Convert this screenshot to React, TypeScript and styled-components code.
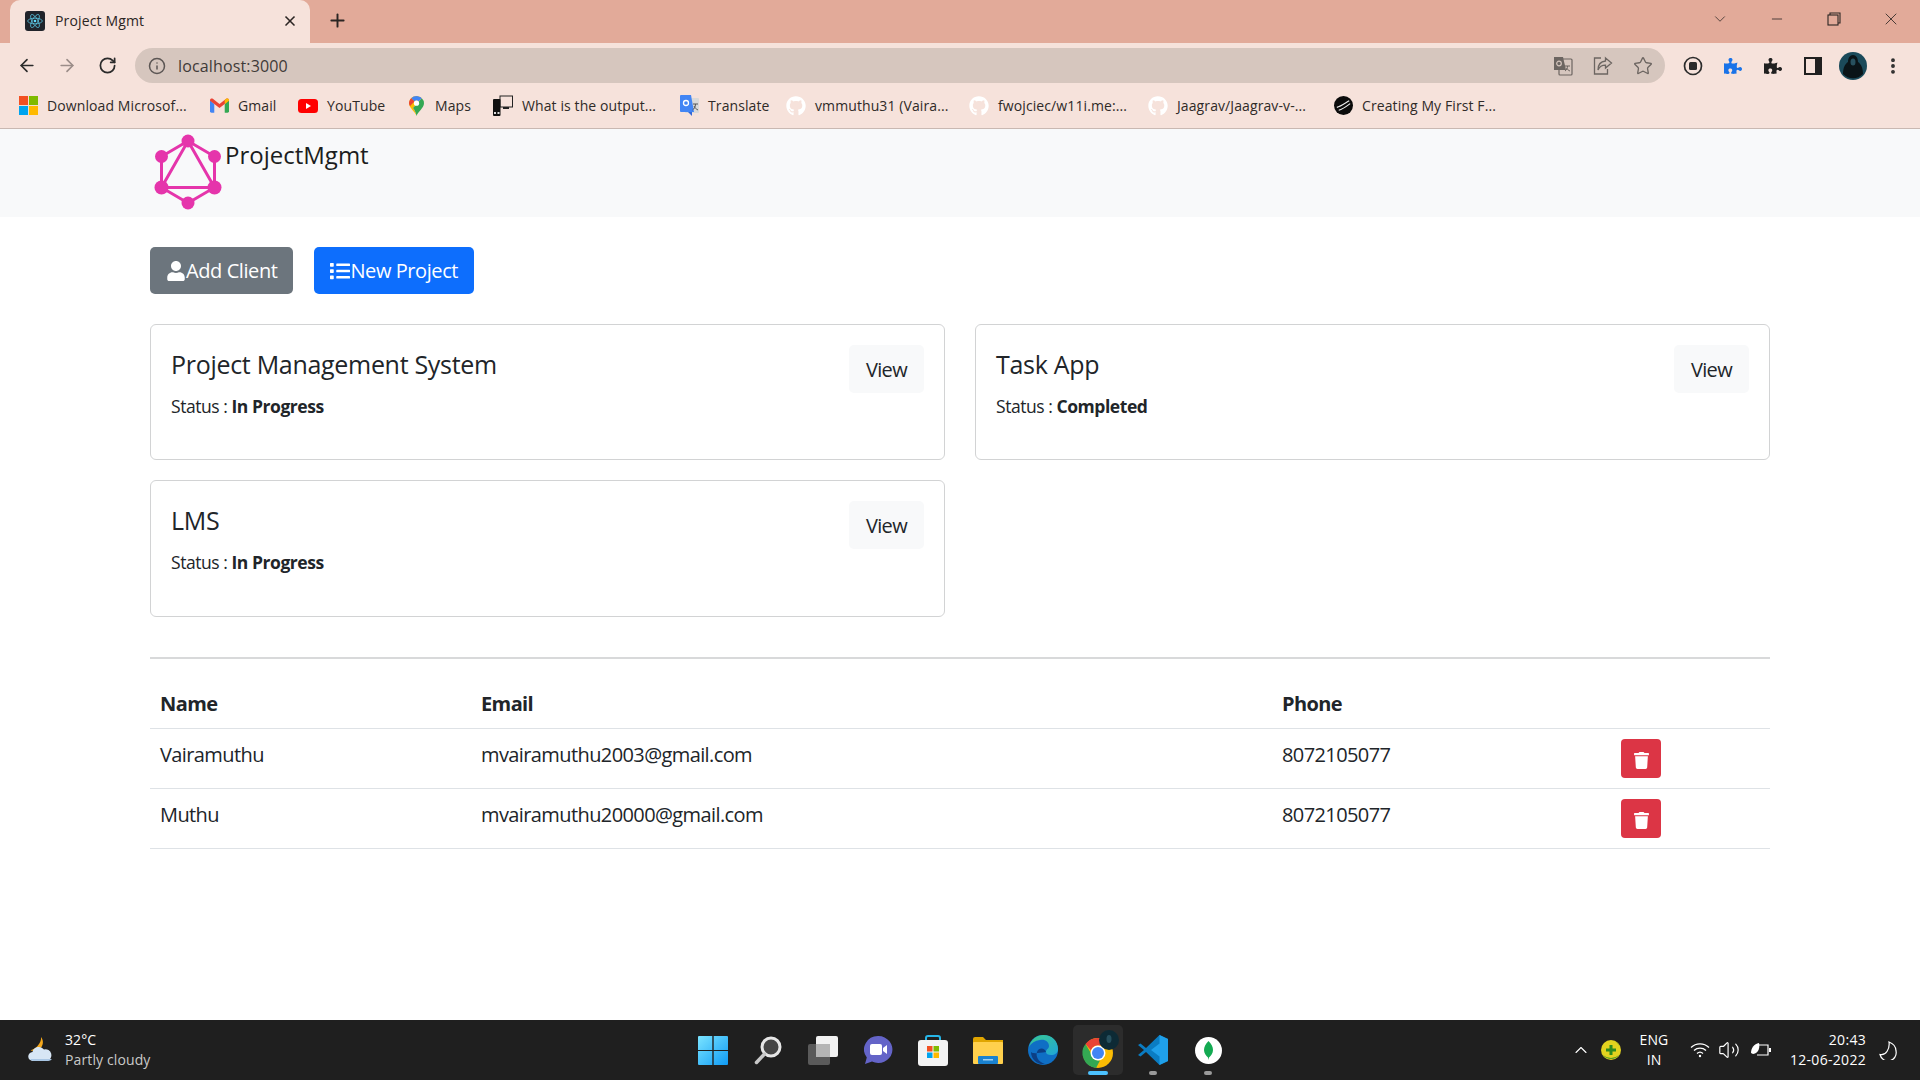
import styled, { createGlobalStyle } from 'styled-components';
import { FaGithub, FaList, FaTrash, FaUser, FaPuzzlePiece } from 'react-icons/fa';
import { ArrowLeft, ArrowRight, RotateCw, Info, X, Plus, Star, ChevronDown, ChevronUp, Minus, EllipsisVertical, Volume2 } from 'lucide-react';

const GlobalStyle = createGlobalStyle`
  * { box-sizing: border-box; }
  html, body { margin: 0; padding: 0; height: 100%; background: #fff; overflow: hidden; }
  body { font-family: "Open Sans", "Liberation Sans", sans-serif; color: #212529; }
`;

const Screen = styled.div`
  display: flex;
  flex-direction: column;
  width: 1920px;
  height: 1080px;
`;

/* browser chrome */
const TabStrip = styled.div`
  display: flex;
  align-items: flex-end;
  height: 43px;
  padding-left: 10px;
  background: #e2aa99;
  color: #2b2523;
`;

const Tab = styled.div`
  display: flex;
  align-items: center;
  width: 300px;
  height: 43px;
  padding: 0 12px 2px 15px;
  background: #f6e2db;
  border-radius: 10px 10px 0 0;
  font-size: 14px;
  letter-spacing: 0.15px;
`;

const Favicon = styled.div`
  display: flex;
  align-items: center;
  justify-content: center;
  width: 20px;
  height: 20px;
  margin-right: 10px;
  background: #20232a;
  border-radius: 3px;
`;

const TabTitle = styled.span`
  flex: 1;
`;

const NewTab = styled.div`
  display: flex;
  align-items: center;
  height: 43px;
  margin-left: 17px;
  padding-bottom: 2px;
`;

const WindowControls = styled.div`
  display: flex;
  align-items: center;
  height: 38px;
  margin: 0 1px 5px auto;
`;

const WindowButton = styled.div`
  display: flex;
  justify-content: center;
  width: 57px;
`;

const Toolbar = styled.div`
  display: flex;
  align-items: center;
  height: 40px;
  padding: 0 0 0 17px;
  background: #f6e2db;
  color: #2b2b2b;
`;

const NavButton = styled.div<{ $muted?: boolean }>`
  display: flex;
  justify-content: center;
  width: 20px;
  margin: 4px 20px 0 0;
  color: ${(p) => (p.$muted ? '#9b8d89' : '#2b2b2b')};
`;

const AddressBar = styled.div`
  display: flex;
  align-items: center;
  width: 1530px;
  height: 35px;
  margin: 5px 0 0 -2px;
  padding: 0 12px 0 13px;
  background: #d6c6be;
  border-radius: 18px;
`;

const AddressText = styled.span`
  flex: 1;
  margin-left: 12px;
  font-size: 16px;
  letter-spacing: 0.15px;
  color: #3f3a38;
`;

const AddressIcons = styled.div`
  display: flex;
  align-items: center;
  gap: 20px;
  color: #6c6561;
`;

const ToolIcons = styled.div`
  display: flex;
  align-items: center;
  margin-top: 5px;
  padding-left: 8px;
`;

const ToolIcon = styled.div`
  display: flex;
  align-items: center;
  justify-content: center;
  width: 40px;
`;

const BookmarkBar = styled.div`
  display: flex;
  align-items: center;
  height: 46px;
  padding: 0 0 0 18px;
  background: #f6e2db;
  border-bottom: 1px solid #c9b8b2;
`;

const Bookmark = styled.div<{ $width: number }>`
  display: flex;
  align-items: center;
  width: ${(p) => p.$width}px;
  font-size: 14px;
  letter-spacing: 0.1px;
  color: #2f2a28;
  white-space: nowrap;
`;

const BookmarkIcon = styled.div`
  display: flex;
  justify-content: center;
  width: 20px;
  margin-right: 9px;
`;

/* app page */
const Navbar = styled.nav`
  height: 88px;
  flex: none;
  background: #f8f9fa;
`;

const Brand = styled.div`
  display: flex;
  width: 1620px;
  margin: 0 auto;
  padding: 5px 0 0 3px;
`;

const BrandName = styled.div`
  margin-left: 2px;
  padding-top: 6px;
  font-size: 24px;
  line-height: 30px;
  letter-spacing: 0;
  color: #1b1d20;
`;

const Main = styled.main`
  flex: 1;
  width: 1620px;
  margin: 0 auto;
  padding-top: 30px;
`;

const ActionRow = styled.div`
  display: flex;
  gap: 21px;
  margin-bottom: 30px;
`;

const ActionButton = styled.button<{ $bg: string }>`
  display: flex;
  align-items: center;
  height: 47px;
  padding: 0 16px 0 16px;
  border: none;
  border-radius: 5px;
  background: ${(p) => p.$bg};
  color: #fff;
  font: inherit;
  font-size: 20px;
  letter-spacing: -0.42px;

  svg {
    width: 20px;
    height: 20px;
    margin-right: 0;
  }
`;

const CardGrid = styled.div`
  display: grid;
  grid-template-columns: 795px 795px;
  grid-template-rows: 136px 137px;
  column-gap: 30px;
  row-gap: 20px;
`;

const Card = styled.div`
  padding: 20px;
  border: 1px solid #d2d3d4;
  border-radius: 6px;
`;

const CardHead = styled.div`
  display: flex;
  justify-content: space-between;
  align-items: flex-start;
  height: 47px;
`;

const CardTitle = styled.h5`
  margin: 0;
  padding-top: 4px;
  font-size: 25px;
  font-weight: 400;
  line-height: 30px;
  letter-spacing: -0.3px;
`;

const ViewButton = styled.button`
  width: 75px;
  height: 48px;
  border: none;
  border-radius: 5px;
  background: #f8f9fa;
  color: #212529;
  font: inherit;
  font-size: 20px;
  letter-spacing: -0.7px;
`;

const Status = styled.p`
  margin: 0;
  font-size: 17.5px;
  line-height: 28px;
  letter-spacing: -0.45px;

  strong {
    font-weight: 700;
  }
`;

const Divider = styled.hr`
  margin: 40px 0 19px;
  border: none;
  border-top: 2px solid #d8d9da;
`;

const Table = styled.table`
  width: 100%;
  border-collapse: collapse;
  table-layout: fixed;
  font-size: 20px;
  letter-spacing: -0.6px;
`;

const Col = styled.col<{ $width: number }>`
  width: ${(p) => p.$width}px;
`;

const HeadCell = styled.th`
  height: 50px;
  padding: 11px 10px 9px;
  border-bottom: 1px solid #dee2e6;
  font-weight: 700;
  text-align: left;
  line-height: 30px;
`;

const Cell = styled.td`
  height: 60px;
  padding: 11px 10px 9px;
  border-bottom: 1px solid #dee2e6;
  line-height: 30px;
  vertical-align: top;
`;

const DeleteButton = styled.button`
  display: flex;
  align-items: center;
  justify-content: center;
  width: 40px;
  height: 39px;
  margin-top: -1px;
  padding: 4px 0 0;
  border: none;
  border-radius: 4px;
  background: #dc3545;
  color: #fff;

  svg {
    width: 15px;
    height: 17px;
  }
`;

/* windows taskbar */
const Taskbar = styled.footer`
  display: grid;
  grid-template-columns: 660px 900px 360px;
  flex: none;
  height: 60px;
  background: #1f1f1f;
  color: #fff;
`;

const Weather = styled.div`
  display: flex;
  align-items: center;
  padding-left: 26px;
`;

const WeatherText = styled.div`
  margin-left: 11px;
  padding-bottom: 1px;
  font-size: 14px;
  line-height: 20px;
  letter-spacing: 0.12px;

  span {
    display: block;
    color: #c9c9c9;
  }
`;

const TaskIcons = styled.div`
  display: flex;
  align-items: center;
  padding-left: 28px;
`;

const TaskIcon = styled.div<{ $active?: boolean; $dot?: 'blue' | 'grey' }>`
  position: relative;
  display: flex;
  align-items: center;
  justify-content: center;
  flex: none;
  width: 50px;
  height: 50px;
  margin-right: 5px;
  border-radius: 5px;
  background: ${(p) => (p.$active ? '#2c2c2c' : 'transparent')};

  &::after {
    content: '';
    display: ${(p) => (p.$dot ? 'block' : 'none')};
    position: absolute;
    left: 50%;
    bottom: 0;
    width: ${(p) => (p.$dot === 'blue' ? 20 : 8)}px;
    height: 4px;
    border-radius: 2px;
    background: ${(p) => (p.$dot === 'blue' ? '#4cc2ff' : '#9a9a9a')};
    transform: translateX(-50%);
  }
`;

const Tray = styled.div`
  display: flex;
  align-items: center;
  padding-left: 10px;
  font-size: 14px;
  letter-spacing: 0.1px;
`;

const TrayIcon = styled.div<{ $width: number }>`
  display: flex;
  justify-content: center;
  flex: none;
  width: ${(p) => p.$width}px;

  svg {
    flex: none;
  }
`;

const Lang = styled.div`
  flex: none;
  width: 48px;
  text-align: center;
  line-height: 20px;
`;

const Clock = styled.div`
  flex: none;
  width: 80px;
  text-align: right;
  line-height: 20px;
  letter-spacing: 0.3px;
  white-space: nowrap;
`;

const ReactMark = () => (
  <svg width="16" height="16" viewBox="-12 -12 24 24" fill="none" stroke="#61dafb" strokeWidth="1">
    <circle r="2" fill="#61dafb" stroke="none" />
    <ellipse rx="11" ry="4.2" />
    <ellipse rx="11" ry="4.2" transform="rotate(60)" />
    <ellipse rx="11" ry="4.2" transform="rotate(120)" />
  </svg>
);

const MsLogo = () => (
  <svg width="19" height="19" viewBox="0 0 20 20">
    <rect width="9.5" height="9.5" fill="#f25022" />
    <rect x="10.5" width="9.5" height="9.5" fill="#7fba00" />
    <rect y="10.5" width="9.5" height="9.5" fill="#00a4ef" />
    <rect x="10.5" y="10.5" width="9.5" height="9.5" fill="#ffb900" />
  </svg>
);

const GmailLogo = () => (
  <svg width="19" height="15" viewBox="0 0 20 15">
    <path d="M0 2v11.5A1.5 1.5 0 0 0 1.500 15H4.500V6z" fill="#4285f4" />
    <path d="M20 2v11.500a1.500 1.500 0 0 1-1.500 1.500H15.500V6z" fill="#34a853" />
    <path d="M4.500 6 0 2.500V1.800C0 .3 1.800-.5 3 .5L10 6l7-5.500c1.200-1 3-.2 3 1.300v.7L15.500 6 10 10z" fill="#ea4335" />
    <path d="M15.500 6 20 2.500V1.800c0-1.500-1.800-2.300-3-1.300L15.500 1.800z" fill="#fbbc04" />
  </svg>
);

const YoutubeLogo = () => (
  <svg width="20" height="14" viewBox="0 0 20 14">
    <rect width="20" height="14" rx="3.500" fill="#f00" />
    <path d="M8 4l5 3-5 3z" fill="#fff" />
  </svg>
);

const MapsLogo = () => (
  <svg width="15" height="20" viewBox="0 0 15 20">
    <path d="M7.500 20C6.500 16 0 12 0 7.200A7.500 7.200 0 0 1 7.500 0c2 0 4 1 5.300 2.200L4 12c1.500 2 3 4.500 3.500 8z" fill="#fbbc04" />
    <path d="M12.800 2.200A7.200 7.200 0 0 1 15 7.200C15 12 8.500 16 7.500 20 7 16.500 5.500 14 4 12z" fill="#34a853" />
    <path d="M2.200 2.200A7.500 7.200 0 0 1 7.500 0c2 0 4 1 5.300 2.200L9.500 5.500a3 3 0 0 0-4 0z" fill="#4285f4" />
    <path d="M2.200 2.200 5.500 5.500 1 10A7 7 0 0 1 0 7.200c0-2 1-3.800 2.200-5z" fill="#ea4335" />
    <circle cx="7.500" cy="7.200" r="2.600" fill="#fff" />
  </svg>
);

const DevicesLogo = () => (
  <svg width="20" height="21" viewBox="0 0 20 21">
    <rect x="7" y="1" width="12.500" height="11" fill="#f6e2db" stroke="#222" />
    <path d="M10 12h6v2h-6z" fill="#222" />
    <rect y="4" width="7.500" height="17" rx="1" fill="#111" />
    <rect x="1" y="17" width="2" height="2" fill="#ddd" />
    <rect x="4.500" y="17" width="2" height="2" fill="#ddd" />
  </svg>
);

const TranslateLogo = () => (
  <svg width="19" height="21" viewBox="0 0 19 21">
    <rect x="5" y="3" width="14" height="15" rx="1" fill="#d9d9d9" />
    <path d="M1 0h10l3 17H1a1 1 0 0 1-1-1V1a1 1 0 0 1 1-1z" fill="#4285f4" />
    <path d="M8 17h4v4z" fill="#3367d6" />
    <circle cx="6" cy="8" r="2.500" fill="none" stroke="#fff" strokeWidth="1.300" />
    <path d="M13 9h5M15.500 9c0 3-1.500 5-3 6M14 11c1 2 2 3 4 4" stroke="#555" strokeWidth="1" fill="none" />
  </svg>
);

const CreatingLogo = () => (
  <svg width="19" height="19" viewBox="0 0 20 20">
    <circle cx="10" cy="10" r="10" fill="#0b0b0b" />
    <path d="M3 12c4-1 8-4 13-7M5 15c4-1 8-4 12-7" stroke="#eee" strokeWidth="1.200" fill="none" />
  </svg>
);

const GraphqlLogo = () => (
  <svg width="70" height="78" viewBox="0 0 70 78" fill="none" stroke="#e535ab" strokeWidth="3">
    <path d="M35 7 61.500 22.500V53.500L35 69 8.500 53.500V22.500Z" />
    <path d="M35 7 61.500 53.500H8.500Z" />
    <g fill="#e535ab" stroke="none">
      <circle cx="35" cy="7" r="6.500" />
      <circle cx="61.500" cy="22.500" r="6.500" />
      <circle cx="61.500" cy="53.500" r="7" />
      <circle cx="35" cy="69" r="6.500" />
      <circle cx="8.500" cy="53.500" r="7" />
      <circle cx="8.500" cy="22.500" r="6.500" />
    </g>
  </svg>
);

const TranslateAction = () => (
  <svg width="20" height="20" viewBox="0 0 20 20">
    <rect x="6" y="3" width="13" height="16" rx="1" fill="#d6c6be" stroke="#6c6561" strokeWidth="1.200" />
    <path d="M1 1h9l3 13H1z" fill="#6c6561" />
    <circle cx="6" cy="7.500" r="2.300" fill="none" stroke="#d6c6be" strokeWidth="1.200" />
    <path d="M12 10h5M14.500 10c0 2.500-1 4-2.500 5M13.500 12c1 1.500 2 2.500 3.500 3" stroke="#6c6561" fill="none" />
  </svg>
);

const ShareAction = () => (
  <svg width="20" height="20" viewBox="0 0 20 20" fill="none" stroke="#6c6561" strokeWidth="1.300">
    <path d="M8 2H1.500v16h13v-5" />
    <path d="M12.500 2 18.500 7 12.500 12V9.200C9 9.200 6.500 10.500 5 14c0-5 2.500-8.500 7.500-9z" />
  </svg>
);

const RecordIcon = () => (
  <svg width="20" height="20" viewBox="0 0 20 20">
    <circle cx="10" cy="10" r="8.500" fill="none" stroke="#2b2b2b" strokeWidth="1.700" />
    <rect x="6" y="6" width="8" height="8" rx="1.500" fill="#2b2b2b" />
  </svg>
);

const SidebarIcon = () => (
  <svg width="18" height="18" viewBox="0 0 18 18">
    <path d="M1 1h16v16H1z" fill="#f6e2db" stroke="#202020" strokeWidth="2" />
    <rect x="11" y="1" width="6" height="16" fill="#202020" />
  </svg>
);

const AvatarIcon = () => (
  <svg width="28" height="28" viewBox="0 0 28 28">
    <circle cx="14" cy="14" r="14" fill="#1b4a5a" />
    <path d="M14 3c3 0 5 3 5 7 3 2 5 6 5 12a14 14 0 0 1-20 0c0-6 2-10 5-12 0-4 2-7 5-7z" fill="#0a1418" />
    <ellipse cx="14" cy="10" rx="2.500" ry="3.500" fill="#27505e" />
  </svg>
);

const WeatherIcon = () => (
  <svg width="28" height="28" viewBox="0 0 28 28">
    <path d="M15 1c2.500 3 2.500 7 .5 10s-6 4.500-11 3.500c1.500-1 4.500-1.500 7-4.500s4-6 3.500-9z" fill="#f5a81c" />
    <path d="M7 25a4.500 4.500 0 0 1-.5-9A6.500 6.500 0 0 1 18 13.500 5.800 5.800 0 0 1 21 25z" fill="#d7e6f5" />
    <path d="M7 25a4.500 4.500 0 0 1-3-2h22a5 5 0 0 1-5 2z" fill="#a9c6e4" />
  </svg>
);

const WindowsIcon = () => (
  <svg width="30" height="29" viewBox="0 0 30 29">
    <defs>
      <linearGradient id="win" x1="0" y1="0" x2="1" y2="1">
        <stop offset="0" stopColor="#7be4ff" />
        <stop offset="1" stopColor="#0f9bf5" />
      </linearGradient>
    </defs>
    <path d="M1 0h13.300v14H0V1a1 1 0 0 1 1-1zM15.700 0H29a1 1 0 0 1 1 1v13H15.700zM0 15h14.300v14H1a1 1 0 0 1-1-1zM15.700 15H30v13a1 1 0 0 1-1 1H15.700z" fill="url(#win)" />
  </svg>
);

const SearchIcon = () => (
  <svg width="28" height="29" viewBox="0 0 28 29">
    <circle cx="17" cy="11" r="9" fill="#454545" stroke="#e6e6e6" strokeWidth="3" />
    <path d="M10.500 18 2.500 26.500" stroke="#c8c8c8" strokeWidth="3.500" strokeLinecap="round" />
  </svg>
);

const TaskViewIcon = () => (
  <svg width="30" height="29" viewBox="0 0 30 29">
    <rect y="8" width="22" height="21" rx="2" fill="#5a5a5a" />
    <rect x="8" width="22" height="21" rx="2" fill="#f2f2f2" />
    <rect x="8" y="8" width="14" height="13" fill="#b5b5b5" />
  </svg>
);

const ChatIcon = () => (
  <svg width="29" height="30" viewBox="0 0 29 30">
    <path d="M14.500 1a14 13.500 0 1 1-6.500 25.500L1 29l1.800-6.500A14 13.500 0 0 1 14.500 1z" fill="#6464c8" />
    <rect x="6" y="9" width="12" height="11" rx="2" fill="#fff" />
    <path d="M19 13l4-3v9l-4-3z" fill="#fff" />
  </svg>
);

const StoreIcon = () => (
  <svg width="30" height="31" viewBox="0 0 30 31">
    <path d="M8 6V3a2 2 0 0 1 2-2h10a2 2 0 0 1 2 2v3" fill="none" stroke="#26b6e8" strokeWidth="2" />
    <rect y="5" width="30" height="26" rx="3" fill="#f3f3f3" />
    <rect x="9" y="11" width="5.500" height="5.500" fill="#f25022" />
    <rect x="15.500" y="11" width="5.500" height="5.500" fill="#7fba00" />
    <rect x="9" y="17.500" width="5.500" height="5.500" fill="#00a4ef" />
    <rect x="15.500" y="17.500" width="5.500" height="5.500" fill="#ffb900" />
  </svg>
);

const FolderIcon = () => (
  <svg width="30" height="27" viewBox="0 0 30 27">
    <path d="M0 2a2 2 0 0 1 2-2h8l3 3h17v8H0z" fill="#e0a500" />
    <rect y="5" width="30" height="22" rx="1" fill="#ffd04d" />
    <rect x="5" y="19" width="20" height="8" rx="1" fill="#1a82d0" />
    <rect x="10" y="22" width="10" height="1.500" fill="#9fd0f2" />
  </svg>
);

const EdgeIcon = () => (
  <svg width="30" height="30" viewBox="0 0 30 30">
    <defs>
      <linearGradient id="edge" x1="0" y1="0" x2="1" y2="1">
        <stop offset="0" stopColor="#3bc98d" />
        <stop offset="1" stopColor="#1fa5d8" />
      </linearGradient>
    </defs>
    <circle cx="15" cy="15" r="15" fill="#0f6fc5" />
    <path d="M1 12C3 4 9 0 15.500 0 24 0 30 6 30 14c0 4-3 6-7 6-3 0-5-1-5-3 0-3 3-3 3-6 0-4-4-7-9-6-5 .8-9 3-11 7z" fill="url(#edge)" />
    <path d="M18 17c-1-4-7-5-9 0-1.500 4 1 10 8 12-7 1-14-4-14-12 2 2 7 1 15 0z" fill="#0c3f85" />
  </svg>
);

const ChromeIcon = () => (
  <svg width="46" height="44" viewBox="-7 -3 46 44">
    <circle cx="16" cy="22" r="15" fill="#fbbc04" />
    <path d="M16 7a15 15 0 0 1 13 7.500H16a7.500 7.500 0 0 0-7 5L3.500 13A15 15 0 0 1 16 7z" fill="#ea4335" />
    <path d="M3.500 13l6.500 11a7.500 7.500 0 0 0 8 5.500L14 37A15 15 0 0 1 3.500 13z" fill="#34a853" />
    <circle cx="16" cy="22" r="7.500" fill="#fff" />
    <circle cx="16" cy="22" r="6" fill="#4285f4" />
    <circle cx="27" cy="9" r="10" fill="#0d2a35" />
    <ellipse cx="27" cy="8" rx="2.500" ry="4" fill="#27505e" />
  </svg>
);

const CodeIcon = () => (
  <svg width="30" height="30" viewBox="0 0 30 30">
    <path d="M21.500 0 30 4v22l-8.500 4L8 17l-5.500 4.500L0 20l6-5-6-5 2.500-1.500L8 13z" fill="#0a7cc2" />
    <path d="M21.500 0 30 4v22l-8.500 4zM21.500 8.500 13 15l8.500 6.500z" fill="#1fa0ea" fillRule="evenodd" />
  </svg>
);

const MongoIcon = () => (
  <svg width="27" height="27" viewBox="0 0 27 27">
    <circle cx="13.500" cy="13.500" r="13.500" fill="#fff" />
    <path d="M13.500 4c3 3 4.500 6 4.500 9s-2 6-4 7.500L13.500 23l-.5-2.500C11 19 9 16 9 13s1.500-6 4.500-9z" fill="#13aa52" />
  </svg>
);

const TrayPlusIcon = () => (
  <svg width="20" height="20" viewBox="0 0 20 20">
    <circle cx="10" cy="10" r="10" fill="#e3d21f" />
    <path d="M2 15a10 10 0 0 0 16 0 12 12 0 0 1-16 0zM12 1a10 10 0 0 1 7 7 9 9 0 0 0-7-7z" fill="#4f9a25" />
    <path d="M8.500 5h3v3.500H15v3h-3.500V15h-3v-3.500H5v-3h3.500z" fill="#2f8a1e" />
  </svg>
);

const WifiIcon = () => (
  <svg width="20" height="16" viewBox="0 0 20 16" fill="none" stroke="#fff" strokeWidth="1.300">
    <path d="M1 5.500a13 13 0 0 1 18 0M4 8.500a9 9 0 0 1 12 0M7 11.500a4.500 4.500 0 0 1 6 0" />
    <circle cx="10" cy="14" r="1.200" fill="#fff" stroke="none" />
  </svg>
);

const BatteryIcon = () => (
  <svg width="21" height="16" viewBox="0 0 21 16" fill="none" stroke="#fff" strokeWidth="1.200">
    <path d="M8 3h9v10H6" />
    <path d="M19 6v4" strokeWidth="2" />
    <path d="M0 11C0 6 3 2 8 1c1 4 0 10-6 11z" fill="#fff" stroke="none" />
  </svg>
);

const MoonIcon = () => (
  <svg width="18" height="19" viewBox="0 0 18 19" fill="none" stroke="#fff" strokeWidth="1.200">
    <path d="M10 1c4 1.500 7 4.500 7 9a8 8 0 0 1-16 3.500c6 1.500 10-6 9-12.500z" />
  </svg>
);

const bookmarks = [
  { label: 'Download Microsof...', icon: <MsLogo />, width: 191 },
  { label: 'Gmail', icon: <GmailLogo />, width: 89 },
  { label: 'YouTube', icon: <YoutubeLogo />, width: 108 },
  { label: 'Maps', icon: <MapsLogo />, width: 87 },
  { label: 'What is the output...', icon: <DevicesLogo />, width: 186 },
  { label: 'Translate', icon: <TranslateLogo />, width: 107 },
  { label: 'vmmuthu31 (Vaira...', icon: <FaGithub size={20} color="#fff" />, width: 183 },
  { label: 'fwojciec/w11i.me:...', icon: <FaGithub size={20} color="#fff" />, width: 179 },
  { label: 'Jaagrav/Jaagrav-v-...', icon: <FaGithub size={20} color="#fff" />, width: 185 },
  { label: 'Creating My First F...', icon: <CreatingLogo />, width: 170 },
];

const projects = [
  { name: 'Project Management System', status: 'In Progress' },
  { name: 'Task App', status: 'Completed' },
  { name: 'LMS', status: 'In Progress' },
];

const clients = [
  { name: 'Vairamuthu', email: 'mvairamuthu2003@gmail.com', phone: '8072105077' },
  { name: 'Muthu', email: 'mvairamuthu20000@gmail.com', phone: '8072105077' },
];

export default function App() {
  return (
    <Screen>
      <GlobalStyle />
      <TabStrip>
        <Tab>
          <Favicon>
            <ReactMark />
          </Favicon>
          <TabTitle>Project Mgmt</TabTitle>
          <X size={16} strokeWidth={2.5} />
        </Tab>
        <NewTab>
          <Plus size={21} strokeWidth={2.2} />
        </NewTab>
        <WindowControls>
          <WindowButton>
            <ChevronDown size={18} strokeWidth={1} />
          </WindowButton>
          <WindowButton>
            <Minus size={16} strokeWidth={1.2} />
          </WindowButton>
          <WindowButton>
            <svg width="14" height="14" viewBox="0 0 14 14" fill="none" stroke="#2b2523" strokeWidth="1.100">
              <rect x="1" y="3" width="10" height="10" />
              <path d="M3 3V1h10v10h-2" />
            </svg>
          </WindowButton>
          <WindowButton>
            <X size={20} strokeWidth={1} />
          </WindowButton>
        </WindowControls>
      </TabStrip>

      <Toolbar>
        <NavButton>
          <ArrowLeft size={21} strokeWidth={2} />
        </NavButton>
        <NavButton $muted>
          <ArrowRight size={21} strokeWidth={2} />
        </NavButton>
        <NavButton>
          <RotateCw size={19} strokeWidth={2.2} />
        </NavButton>
        <AddressBar>
          <Info size={18} color="#5c5654" strokeWidth={2} />
          <AddressText>localhost:3000</AddressText>
          <AddressIcons>
            <TranslateAction />
            <ShareAction />
            <Star size={20} strokeWidth={1.6} />
          </AddressIcons>
        </AddressBar>
        <ToolIcons>
          <ToolIcon>
            <RecordIcon />
          </ToolIcon>
          <ToolIcon>
            <FaPuzzlePiece size={18} color="#1a73e8" />
          </ToolIcon>
          <ToolIcon>
            <FaPuzzlePiece size={18} color="#202020" />
          </ToolIcon>
          <ToolIcon>
            <SidebarIcon />
          </ToolIcon>
          <ToolIcon>
            <AvatarIcon />
          </ToolIcon>
          <ToolIcon>
            <EllipsisVertical size={20} strokeWidth={2.6} />
          </ToolIcon>
        </ToolIcons>
      </Toolbar>

      <BookmarkBar>
        {bookmarks.map((b) => (
          <Bookmark key={b.label} $width={b.width}>
            <BookmarkIcon>{b.icon}</BookmarkIcon>
            {b.label}
          </Bookmark>
        ))}
      </BookmarkBar>

      <Navbar>
        <Brand>
          <GraphqlLogo />
          <BrandName>ProjectMgmt</BrandName>
        </Brand>
      </Navbar>

      <Main>
        <ActionRow>
          <ActionButton $bg="#6c757d">
            <FaUser />
            Add Client
          </ActionButton>
          <ActionButton $bg="#0d6efd">
            <FaList />
            New Project
          </ActionButton>
        </ActionRow>

        <CardGrid>
          {projects.map((p) => (
            <Card key={p.name}>
              <CardHead>
                <CardTitle>{p.name}</CardTitle>
                <ViewButton>View</ViewButton>
              </CardHead>
              <Status>
                Status : <strong>{p.status}</strong>
              </Status>
            </Card>
          ))}
        </CardGrid>

        <Divider />

        <Table>
          <colgroup>
            <Col $width={321} />
            <Col $width={801} />
            <Col $width={339} />
            <Col $width={159} />
          </colgroup>
          <thead>
            <tr>
              <HeadCell>Name</HeadCell>
              <HeadCell>Email</HeadCell>
              <HeadCell>Phone</HeadCell>
              <HeadCell />
            </tr>
          </thead>
          <tbody>
            {clients.map((c) => (
              <tr key={c.email}>
                <Cell>{c.name}</Cell>
                <Cell>{c.email}</Cell>
                <Cell>{c.phone}</Cell>
                <Cell>
                  <DeleteButton>
                    <FaTrash />
                  </DeleteButton>
                </Cell>
              </tr>
            ))}
          </tbody>
        </Table>
      </Main>

      <Taskbar>
        <Weather>
          <WeatherIcon />
          <WeatherText>
            32°C
            <span>Partly cloudy</span>
          </WeatherText>
        </Weather>
        <TaskIcons>
          <TaskIcon>
            <WindowsIcon />
          </TaskIcon>
          <TaskIcon>
            <SearchIcon />
          </TaskIcon>
          <TaskIcon>
            <TaskViewIcon />
          </TaskIcon>
          <TaskIcon>
            <ChatIcon />
          </TaskIcon>
          <TaskIcon>
            <StoreIcon />
          </TaskIcon>
          <TaskIcon>
            <FolderIcon />
          </TaskIcon>
          <TaskIcon>
            <EdgeIcon />
          </TaskIcon>
          <TaskIcon $active $dot="blue">
            <ChromeIcon />
          </TaskIcon>
          <TaskIcon $dot="grey">
            <CodeIcon />
          </TaskIcon>
          <TaskIcon $dot="grey">
            <MongoIcon />
          </TaskIcon>
        </TaskIcons>
        <Tray>
          <TrayIcon $width={22}>
            <ChevronUp size={20} strokeWidth={1.3} />
          </TrayIcon>
          <TrayIcon $width={38}>
            <TrayPlusIcon />
          </TrayIcon>
          <Lang>
            ENG
            <br />
            IN
          </Lang>
          <TrayIcon $width={44}>
            <WifiIcon />
          </TrayIcon>
          <TrayIcon $width={14}>
            <Volume2 size={22} strokeWidth={1.3} />
          </TrayIcon>
          <TrayIcon $width={50}>
            <BatteryIcon />
          </TrayIcon>
          <Clock>
            20:43
            <br />
            12-06-2022
          </Clock>
          <TrayIcon $width={44}>
            <MoonIcon />
          </TrayIcon>
        </Tray>
      </Taskbar>
    </Screen>
  );
}
